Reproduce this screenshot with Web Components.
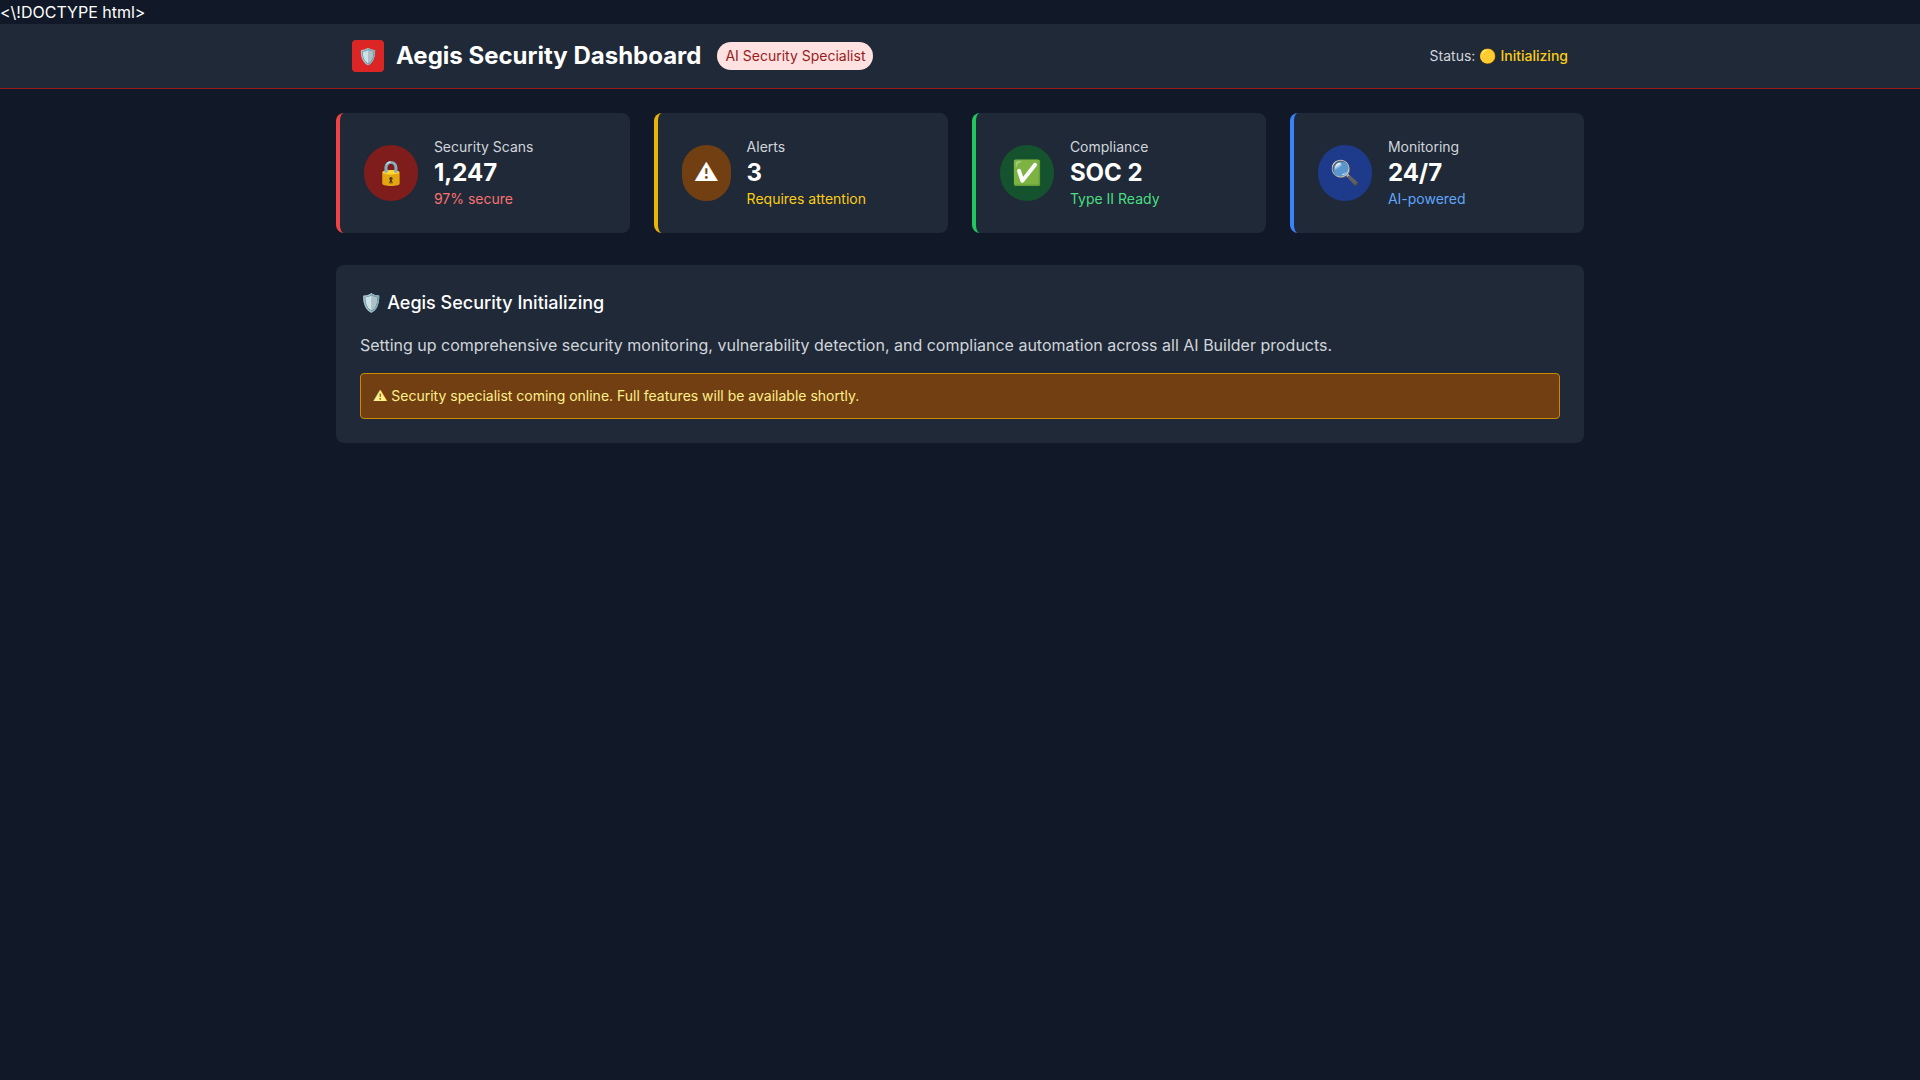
<!DOCTYPE html>
<html lang="en">
<head>
<meta charset="utf-8">
<meta name="viewport" content="width=device-width, initial-scale=1">
<title>Aegis Security Dashboard</title>
<style>
  body {
    margin: 0;
    min-height: 100vh;
    background: #111827;
    color: #fff;
    font: 16px/24px Inter, "Noto Color Emoji", sans-serif;
    text-rendering: optimizeSpeed;
  }
</style>
</head>
<body>
<aegis-app></aegis-app>

<template id="app-template">
  <style>
    :host { display: block; }
    main {
      box-sizing: border-box;
      max-width: 1280px;
      margin: 0 auto;
      padding: 24px 16px;
    }
    .stats {
      display: grid;
      grid-template-columns: repeat(auto-fit, minmax(260px, 1fr));
      gap: 24px;
      margin-bottom: 32px;
    }
  </style>
  <div>&lt;\!DOCTYPE html&gt;</div>
  <aegis-header>
    <span slot="icon">🛡️</span>
    Aegis Security Dashboard
    <span slot="badge">AI Security Specialist</span>
    <span slot="status">🟡 Initializing</span>
  </aegis-header>
  <main>
    <div class="stats">
      <stat-card tone="red"><span slot="icon">🔒</span><span slot="label">Security Scans</span><span slot="value">1,247</span><span slot="note">97% secure</span></stat-card>
      <stat-card tone="yellow"><span slot="icon">⚠</span><span slot="label">Alerts</span><span slot="value">3</span><span slot="note">Requires attention</span></stat-card>
      <stat-card tone="green"><span slot="icon">✅</span><span slot="label">Compliance</span><span slot="value">SOC 2</span><span slot="note">Type II Ready</span></stat-card>
      <stat-card tone="blue"><span slot="icon">🔍</span><span slot="label">Monitoring</span><span slot="value">24/7</span><span slot="note">AI-powered</span></stat-card>
    </div>
    <info-panel>
      <span slot="title">🛡️ Aegis Security Initializing</span>
      Setting up comprehensive security monitoring, vulnerability detection, and compliance automation across all AI Builder products.
      <alert-note slot="alert">⚠ Security specialist coming online. Full features will be available shortly.</alert-note>
    </info-panel>
  </main>
</template>

<template id="header-template">
  <style>
    :host { display: block; }
    header { background: #1f2937; border-bottom: 1px solid #991b1b; }
    .bar {
      box-sizing: border-box;
      max-width: 1280px;
      min-height: 64px;
      margin: 0 auto;
      padding: 0 32px;
      display: flex;
      align-items: center;
      justify-content: space-between;
    }
    .brand { display: flex; align-items: center; }
    .icon {
      width: 32px;
      height: 32px;
      display: flex;
      align-items: center;
      justify-content: center;
      border-radius: 4px;
      background: #dc2626;
    }
    h1 { margin: 0 16px 0 12px; font-size: 24px; line-height: 32px; font-weight: 700; }
    .badge {
      padding: 4px 8px;
      border-radius: 14px;
      background: #fee2e2;
      color: #991b1b;
      font-size: 14px;
      line-height: 20px;
    }
    .status { color: #d1d5db; font-size: 14px; line-height: 20px; }
    .state { color: #facc15; font-weight: 500; }
  </style>
  <header>
    <div class="bar">
      <div class="brand">
        <div class="icon"><slot name="icon"></slot></div>
        <h1><slot></slot></h1>
        <span class="badge"><slot name="badge"></slot></span>
      </div>
      <div class="status">Status: <span class="state"><slot name="status"></slot></span></div>
    </div>
  </header>
</template>

<template id="card-template">
  <style>
    :host {
      --edge: #ef4444; --disc: #7f1d1d; --note: #f87171;
      box-sizing: border-box;
      display: flex;
      align-items: center;
      gap: 16px;
      padding: 24px;
      border-left: 4px solid var(--edge);
      border-radius: 8px;
      background: #1f2937;
    }
    :host([tone="yellow"]) { --edge: #eab308; --disc: #713f12; --note: #facc15; }
    :host([tone="green"]) { --edge: #22c55e; --disc: #14532d; --note: #4ade80; }
    :host([tone="blue"]) { --edge: #3b82f6; --disc: #1e3a8a; --note: #60a5fa; }
    .icon {
      padding: 12px;
      border-radius: 9999px;
      background: var(--disc);
      font-size: 24px;
      line-height: 32px;
    }
    p { margin: 0; font-size: 14px; line-height: 20px; }
    .label { color: #d1d5db; }
    .value { font-size: 24px; line-height: 32px; font-weight: 700; }
    .note { color: var(--note); }
  </style>
  <div class="icon"><slot name="icon"></slot></div>
  <div>
    <p class="label"><slot name="label"></slot></p>
    <p class="value"><slot name="value"></slot></p>
    <p class="note"><slot name="note"></slot></p>
  </div>
</template>

<template id="panel-template">
  <style>
    :host { display: block; padding: 24px; border-radius: 8px; background: #1f2937; }
    h2 { margin: 0 0 16px; font-size: 18px; line-height: 28px; font-weight: 500; }
    p { margin: 0 0 16px; color: #d1d5db; }
  </style>
  <h2><slot name="title"></slot></h2>
  <p><slot></slot></p>
  <slot name="alert"></slot>
</template>

<template id="alert-template">
  <style>
    :host {
      display: block;
      padding: 12px;
      border: 1px solid #ca8a04;
      border-radius: 4px;
      background: #713f12;
      color: #fef08a;
      font-size: 14px;
      line-height: 20px;
    }
  </style>
  <slot></slot>
</template>

<script>
  class TemplateElement extends HTMLElement {
    constructor() {
      super();
      const template = document.getElementById(this.constructor.template);
      this.attachShadow({ mode: "open" }).append(document.importNode(template.content, true));
    }
  }
  class AegisHeader extends TemplateElement { static template = "header-template"; }
  class StatCard extends TemplateElement { static template = "card-template"; }
  class InfoPanel extends TemplateElement { static template = "panel-template"; }
  class AlertNote extends TemplateElement { static template = "alert-template"; }
  class AegisApp extends TemplateElement { static template = "app-template"; }

  customElements.define("aegis-header", AegisHeader);
  customElements.define("stat-card", StatCard);
  customElements.define("info-panel", InfoPanel);
  customElements.define("alert-note", AlertNote);
  customElements.define("aegis-app", AegisApp);
</script>
</body>
</html>
